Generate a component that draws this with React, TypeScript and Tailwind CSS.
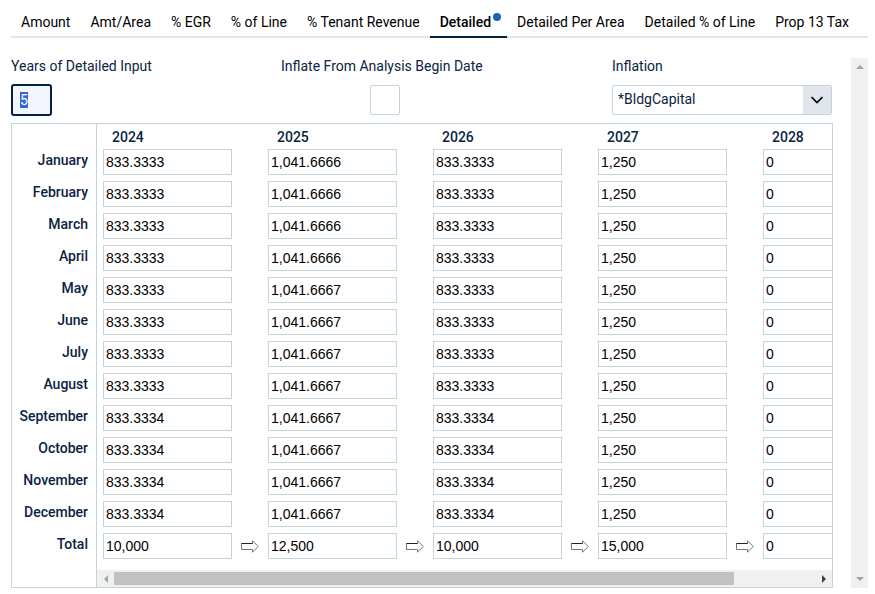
import { useEffect, useRef } from "react";

type YearColumn = { year: number; months: string[]; total: string };

const tabs = [
  "Amount",
  "Amt/Area",
  "% EGR",
  "% of Line",
  "% Tenant Revenue",
  "Detailed",
  "Detailed Per Area",
  "Detailed % of Line",
  "Prop 13 Tax",
];

const months = [
  "January",
  "February",
  "March",
  "April",
  "May",
  "June",
  "July",
  "August",
  "September",
  "October",
  "November",
  "December",
];

// the rounding remainder lands on the last months of the year
const split = (early: string, late: string, from: number) =>
  months.map((_, i) => (i < from ? early : late));

const years: YearColumn[] = [
  { year: 2024, months: split("833.3333", "833.3334", 8), total: "10,000" },
  { year: 2025, months: split("1,041.6666", "1,041.6667", 4), total: "12,500" },
  { year: 2026, months: split("833.3333", "833.3334", 8), total: "10,000" },
  { year: 2027, months: split("1,250", "1,250", 0), total: "15,000" },
  { year: 2028, months: split("0", "0", 0), total: "0" },
];

function TabBar() {
  return (
    <nav className="flex border-b-2 border-[#e1e5ec]">
      {tabs.map((tab) => {
        const active = tab === "Detailed";
        return (
          <button
            key={tab}
            aria-current={active ? "page" : undefined}
            className={
              active
                ? "relative -mb-0.5 flex h-[38px] items-center border-b-2 border-[#04203f] pt-2 pr-4 pb-0 pl-2.5 font-medium whitespace-nowrap text-black"
                : "flex h-9 items-center px-2.5 pt-2 whitespace-nowrap text-black"
            }
          >
            {tab}
            {active && <span className="absolute top-[13px] right-1.5 size-2 rounded-full bg-[#1465c0]" />}
          </button>
        );
      })}
    </nav>
  );
}

function Settings() {
  const yearsRef = useRef<HTMLInputElement>(null);

  useEffect(() => {
    yearsRef.current?.focus();
    yearsRef.current?.select();
  }, []);

  return (
    <div className="flex leading-4">
      <div className="flex w-[270px] flex-col gap-2.5">
        <label htmlFor="years">Years of Detailed Input</label>
        <input
          id="years"
          ref={yearsRef}
          defaultValue="5"
          className="h-8 w-[41px] rounded-[3px] border-2 border-[#04203f] bg-[#f3f6fc] px-[7px] outline-none selection:bg-[#3367d1] selection:text-white"
        />
      </div>
      <div className="flex w-[208px] flex-col gap-2.5">
        <label htmlFor="inflate">Inflate From Analysis Begin Date</label>
        <div className="flex h-8 items-center justify-center">
          <input
            id="inflate"
            type="checkbox"
            className="size-[30px] appearance-none rounded-xs border border-[#c2d4dc] bg-white"
          />
        </div>
      </div>
      <div className="ml-auto flex w-[221px] flex-col gap-2.5">
        <label htmlFor="inflation">Inflation</label>
        <div className="flex h-8 items-center">
          <div className="relative h-[30px] w-[220px] overflow-hidden rounded-xs border border-[#c2d4dc]">
            <select id="inflation" className="h-7 w-full appearance-none bg-white pr-8 pb-0.5 pl-[5px] outline-none">
              <option>*BldgCapital</option>
            </select>
            <span className="pointer-events-none absolute inset-y-0 right-0 flex w-7 items-center justify-center bg-[#e1e6ed]">
              <svg width="14" height="8" viewBox="0 0 14 8" fill="none" stroke="#000" strokeWidth="1.7">
                <path d="M1.500 1l5.500 5.500L12.500 1" />
              </svg>
            </span>
          </div>
        </div>
      </div>
    </div>
  );
}

function CopyArrow({ year }: { year: number }) {
  return (
    <button aria-label={`Copy ${year} forward`} className="flex w-9 shrink-0 items-center justify-center">
      <svg width="18" height="13" viewBox="0 0 18 13" fill="#fff">
        <path d="M.5 3.5H11.500V.8L17.300 6.500L11.500 12.200V9.500H.5Z" stroke="#777" />
        <path d="M.5 3.500H11.500" fill="none" stroke="#222" />
      </svg>
    </button>
  );
}

function Row({ label, values, total }: { label: string; values: string[]; total?: boolean }) {
  return (
    <tr className="h-8">
      <th
        scope="row"
        className="border-r border-[#c2d4dc] pr-2 pb-1 text-right align-middle font-medium"
      >
        {label}
      </th>
      {values.map((value, i) => (
        <td key={years[i].year} className="pl-1.5">
          <div className="flex items-center">
            <input
              aria-label={`${label} ${years[i].year}`}
              defaultValue={value}
              className="h-[26px] w-[129px] shrink-0 border border-[#c2d4dc] bg-white px-0.5 font-['Liberation_Sans',Arial,sans-serif] text-black"
            />
            {total && i < values.length - 1 && <CopyArrow year={years[i].year} />}
          </div>
        </td>
      ))}
    </tr>
  );
}

function DetailGrid() {
  return (
    <div className="mt-[7px] border border-[#c2d4dc]">
      <div className="overflow-hidden">
        <table className="w-[910px] table-fixed border-separate border-spacing-0">
          <thead>
            <tr className="h-[22px]">
              <td className="w-[85px] border-r border-[#c2d4dc]" />
              {years.map(({ year }) => (
                <th key={year} scope="col" className="w-[165px] pt-1 pl-[15px] text-left leading-[18px] font-medium">
                  {year}
                </th>
              ))}
            </tr>
          </thead>
          <tbody>
            {months.map((month, i) => (
              <Row key={month} label={month} values={years.map((y) => y.months[i])} />
            ))}
            <Row label="Total" values={years.map((y) => y.total)} total />
          </tbody>
        </table>
      </div>
      <div className="flex">
        <div className="w-[85px] shrink-0 border-r border-[#c2d4dc]" />
        <div className="flex-1 pt-2">
          <div className="flex h-[17px] items-center bg-[#f0f0f0]">
            <div className="flex w-[17px] justify-center">
              <svg width="4" height="8" viewBox="0 0 4 8" fill="#a3a3a3">
                <path d="M4 0v8L0 4z" />
              </svg>
            </div>
            <div className="flex-1">
              <div className="h-[13px] w-[88.5%] bg-[#c1c1c1]" />
            </div>
            <div className="flex w-[17px] justify-center">
              <svg width="4" height="8" viewBox="0 0 4 8" fill="#404040">
                <path d="M0 0v8l4-4z" />
              </svg>
            </div>
          </div>
        </div>
      </div>
    </div>
  );
}

function PageScrollbar() {
  return (
    <div className="flex w-[17px] shrink-0 flex-col items-center justify-between bg-[#f0f0f0] py-[7px]">
      <svg width="8" height="4" viewBox="0 0 8 4" fill="#a3a3a3">
        <path d="M0 4h8L4 0z" />
      </svg>
      <svg width="8" height="4" viewBox="0 0 8 4" fill="#a3a3a3">
        <path d="M0 0h8L4 4z" />
      </svg>
    </div>
  );
}

export default function App() {
  return (
    <div className="bg-white pr-[7px] pb-1.5 pl-[11px] font-[Roboto,sans-serif] text-sm text-[#0b2341]">
      <TabBar />
      <main className="mt-5 flex gap-[18px]">
        <div className="min-w-0 flex-1">
          <Settings />
          <DetailGrid />
        </div>
        <PageScrollbar />
      </main>
    </div>
  );
}
